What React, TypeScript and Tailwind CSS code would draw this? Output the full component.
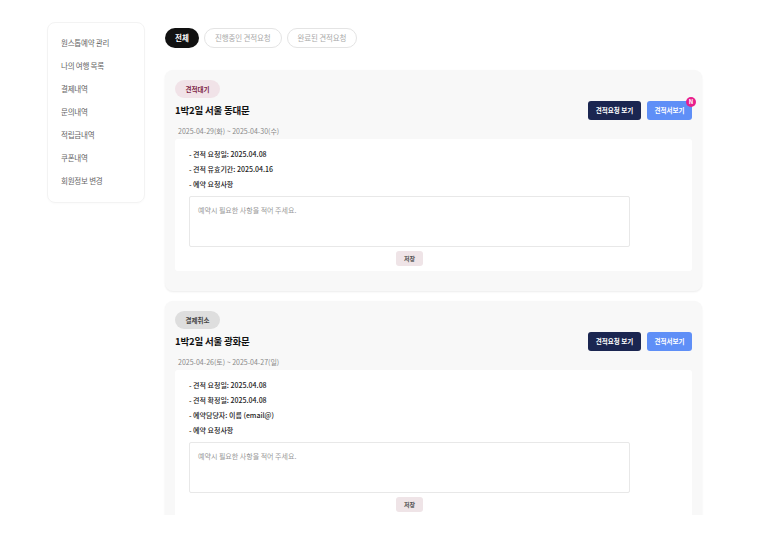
import React from 'react';

const font = { fontFamily: '"Noto Sans CJK KR", "Noto Sans", sans-serif' };

const menu = ['원스톱예약 관리', '나의 여행 목록', '결제내역', '문의내역', '적립금내역', '쿠폰내역', '회원정보 변경'];

interface QuoteCardProps {
  status: string;
  statusClass: string;
  title: string;
  dates: string;
  lines: string[];
  isNew?: boolean;
}

const QuoteCard: React.FC<QuoteCardProps> = ({ status, statusClass, title, dates, lines, isNew }) => (
  <section className="bg-[#f8f8f8] rounded-lg shadow-[0_1px_2px_rgba(0,0,0,0.08)] px-[10px] pt-[10px] pb-[20px]">
    {/* Status badge */}
    <div className={`flex w-[45px] h-[18px] items-center justify-center rounded-full text-[6.5px] font-bold leading-none ${statusClass}`}>
      {status}
    </div>

    {/* Title + actions */}
    <div className="flex items-center justify-between mt-[3px] h-[19px]">
      <h2 className="text-[9.5px] font-bold text-[#111] tracking-[-0.02em]">{title}</h2>
      <div className="flex items-center gap-[6px]">
        <button className="h-[19px] w-[53px] rounded-[3px] bg-[#1b2651] text-white text-[6.5px] font-bold">
          견적요청 보기
        </button>
        <button className="relative h-[19px] w-[45px] rounded-[3px] bg-[#5f8ff7] text-white text-[6.5px] font-bold">
          견적서보기
          {isNew && (
            <span className="absolute -top-[4px] -right-[4px] w-[10px] h-[10px] rounded-full bg-[#e81f8c] text-white text-[6px] font-bold flex items-center justify-center leading-none">
              N
            </span>
          )}
        </button>
      </div>
    </div>

    <p className="mt-[5px] ml-[3px] text-[7px] text-[#888] leading-[12px]">{dates}</p>

    {/* Detail box */}
    <div className="mt-[2px] bg-white rounded-[3px] pl-[14px] pt-[8px] pb-[5px]">
      <ul className="flex flex-col">
        {lines.map((l) => (
          <li key={l} className="h-[15px] flex items-center text-[7px] font-medium text-[#222]">- {l}</li>
        ))}
      </ul>
      <div className="w-[441px] mt-[4px] flex flex-col items-center">
        <textarea
          readOnly
          placeholder="예약시 필요한 사항을 적어 주세요."
          className="block w-full h-[51px] border border-[#e8e8e8] rounded-[2px] px-[8px] py-[8px] text-[7px] text-[#222] placeholder:text-[#999] resize-none outline-none"
        />
        <button className="mt-[4px] h-[15px] w-[27px] rounded-[3px] bg-[#efe4e7] text-[6px] font-bold text-[#555]">저장</button>
      </div>
    </div>
  </section>
);

export default function App() {
  return (
    <div className="w-[760px] h-[540px] bg-white" style={font}>
      <div className="flex h-[515px] overflow-hidden pl-[47px] pt-[22px]">
        {/* Sidebar */}
        <aside className="w-[98px] h-[181px] shrink-0 rounded-lg border border-[#f3f3f3] shadow-[0_1px_2px_rgba(0,0,0,0.02)] pl-[13px] pt-[13px]">
          <ul className="flex flex-col gap-[9px]">
            {menu.map((m) => (
              <li key={m} className="h-[14px] flex items-center text-[7.5px] text-[#666] tracking-[-0.03em]">{m}</li>
            ))}
          </ul>
        </aside>

        {/* Main */}
        <main className="ml-[20px] w-[537px] pt-[6px]">
          <nav className="flex items-center gap-[5px]">
            <button className="h-[20px] px-[10px] rounded-full bg-[#111] text-white text-[7.5px] font-bold">전체</button>
            <button className="h-[20px] w-[78px] rounded-full border border-[#e4e4e4] text-[#aaa] text-[7.5px] tracking-[-0.02em]">진행중인 견적요청</button>
            <button className="h-[20px] w-[70px] rounded-full border border-[#e4e4e4] text-[#aaa] text-[7.5px] tracking-[-0.02em]">완료된 견적요청</button>
          </nav>

          <div className="mt-[22px] flex flex-col gap-[10px]">
            <QuoteCard
              status="견적대기"
              statusClass="bg-[#f1e3e8] text-[#7d2445]"
              title="1박2일 서울 동대문"
              dates="2025-04-29(화) ~ 2025-04-30(수)"
              lines={['견적 요청일: 2025.04.08', '견적 유효기간: 2025.04.16', '예약 요청사항']}
              isNew
            />
            <QuoteCard
              status="결제취소"
              statusClass="bg-[#dedede] text-[#444]"
              title="1박2일 서울 광화문"
              dates="2025-04-26(토) ~ 2025-04-27(일)"
              lines={['견적 요청일: 2025.04.08', '견적 확정일: 2025.04.08', '예약담당자: 이름 (email@)', '예약 요청사항']}
            />
          </div>
        </main>
      </div>
    </div>
  );
}
